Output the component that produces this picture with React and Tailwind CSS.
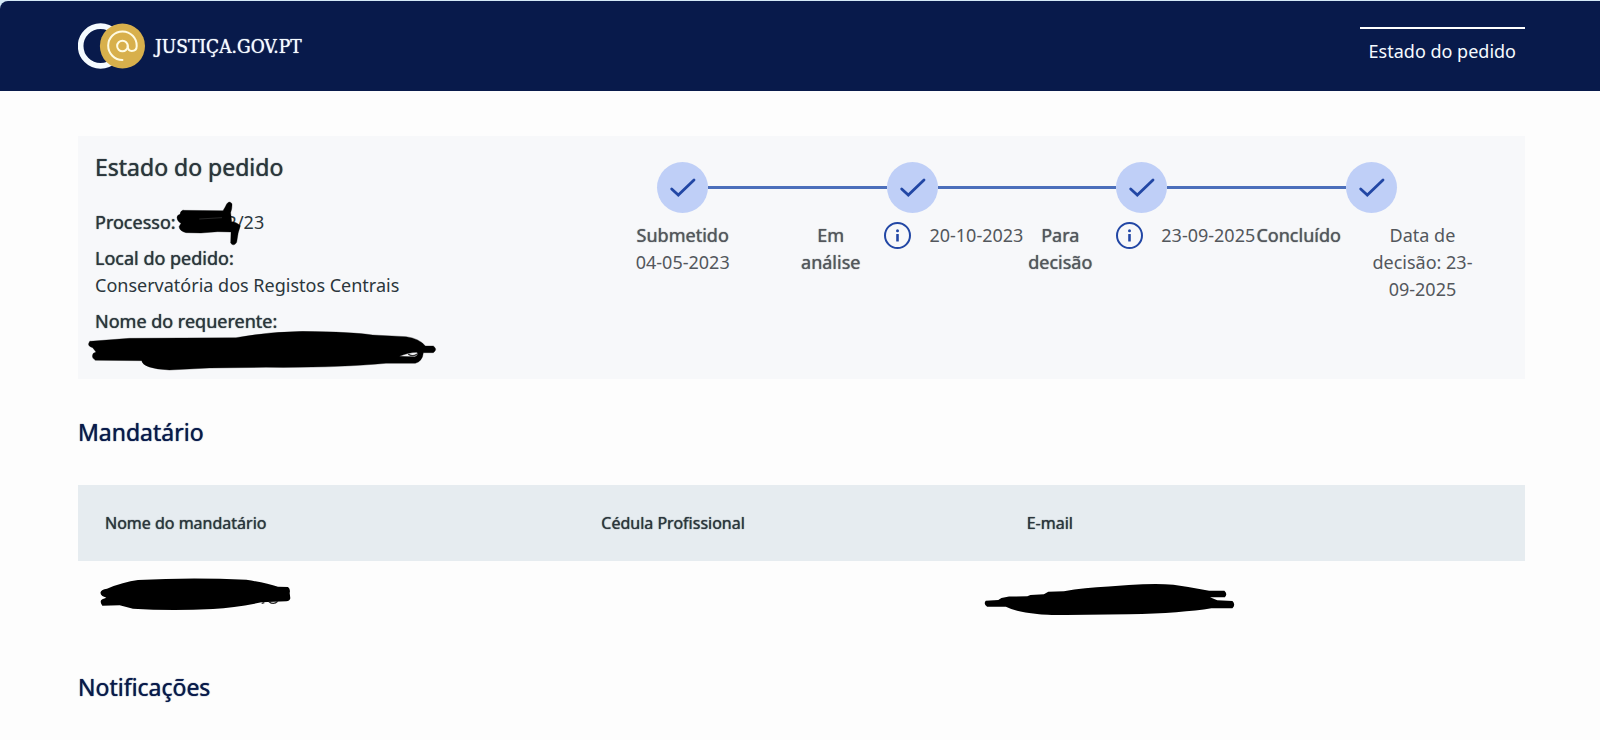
import React from 'react';

const steps = [
  { label: 'Submetido', date: '04-05-2023', layout: 'stacked' },
  { label: 'Em análise', date: '20-10-2023', layout: 'info' },
  { label: 'Para decisão', date: '23-09-2025', layout: 'info' },
  { label: 'Concluído', date: 'Data de decisão: 23-09-2025', layout: 'final' },
];

function Logo() {
  return (
    <svg viewBox="0 0 202 138" className="h-[46px] w-[67px] shrink-0" aria-hidden="true">
      <circle cx="68" cy="69" r="60" fill="none" stroke="#f5fbff" strokeWidth="17" />
      <circle cx="134" cy="69" r="68" fill="#d8b04c" />
      <circle cx="134" cy="69" r="16" fill="none" stroke="#fffbe2" strokeWidth="6" />
      <path
        d="M150 69 C150 79 154 84 162 84 C171 84 177 78 177 69 A43 43 0 1 0 134 111"
        fill="none"
        stroke="#fffbe2"
        strokeWidth="6"
        strokeLinecap="round"
      />
    </svg>
  );
}

function StepDetails({ step }) {
  if (step.layout === 'stacked') {
    return (
      <div className="text-center">
        <p className="[text-shadow:0_0_1px_currentColor]">{step.label}</p>
        <p>{step.date}</p>
      </div>
    );
  }
  if (step.layout === 'info') {
    return (
      <div className="flex items-start justify-center">
        <p className="w-min text-center [text-shadow:0_0_1px_currentColor]">{step.label}</p>
        <button type="button" aria-label="Informação" className="ml-6 mr-[18px] shrink-0">
          <svg viewBox="0 0 27 27" className="block size-[27px]">
            <circle cx="13.5" cy="13.5" r="12.5" fill="none" stroke="#2247a5" strokeWidth="2" />
            <rect x="12.2" y="12" width="2.600" height="7.500" rx="0.5" fill="#2247a5" />
            <circle cx="13.5" cy="8.700" r="1.500" fill="#2247a5" />
          </svg>
        </button>
        <p className="whitespace-nowrap">{step.date}</p>
      </div>
    );
  }
  return (
    <div className="flex items-start">
      <p className="[text-shadow:0_0_1px_currentColor]">{step.label}</p>
      <p className="flex-1 pl-[27px] pr-[9px] text-center">{step.date}</p>
    </div>
  );
}

export default function App() {
  return (
    <div className="min-h-screen bg-[#fdfdfd] font-['Noto_Sans',sans-serif] text-[#2b363c]">
      <div className="bg-[#d5eaf7] pt-px">
        <header className="flex h-[90px] items-start justify-between rounded-tl-lg bg-[#081a4b] pl-[78px] pr-[75px] text-[#f5fbff]">
          <a href="#" className="flex items-center gap-[10px] pt-[22px]">
            <Logo />
            <span className="font-['DejaVu_Serif_Condensed','DejaVu_Serif',serif] text-[19px] leading-[27px] [text-shadow:0_0_1px_currentColor]">
              JUSTIÇA.GOV.PT
            </span>
          </a>
          <nav className="pt-[26px]">
            <a href="#" className="block border-t-2 border-white px-[9px] pt-[9px] text-[18px] leading-[27px]">
              Estado do pedido
            </a>
          </nav>
        </header>
      </div>

      <main className="pb-9 pl-[78px] pr-[75px] pt-[45px] text-[18px] leading-[27px]">
        <section className="flex justify-between bg-[#f7f8fa] pb-[17px] pl-[17px] pr-[39px] pt-4">
          <div>
            <h1 className="text-[23px] leading-[30px] [text-shadow:0_0_1px_currentColor]">Estado do pedido</h1>
            <dl className="mt-[27px] flex flex-col gap-[9px]">
              <div className="flex">
                <dt className="[text-shadow:0_0_1px_currentColor]">Processo:</dt>
                <dd className="relative pl-[51px]">
                  2/23
                  <svg
                    viewBox="315 210 201 135"
                    className="absolute -top-2 left-0 h-[45px] w-[67px]"
                    fill="none"
                    stroke="#000"
                    strokeLinecap="round"
                    strokeLinejoin="round"
                    aria-hidden="true"
                  >
                    <path
                      d="M336 238 L456 239 Q462 230 467 219 Q475 208 483 218 Q484 230 479 245 L482 272 Q495 272 508 284 Q500 305 497 334 Q488 348 479 336 L480 303 L440 302 L390 306 L345 305 Q326 300 324 287 L330 277 Q318 270 318 260 Q318 252 327 250 Q328 240 336 238 Z"
                      fill="#000"
                    />
                    <path d="M386 264 L452 260" stroke="#777" strokeWidth="1" />
                  </svg>
                </dd>
              </div>
              <div>
                <dt className="[text-shadow:0_0_1px_currentColor]">Local do pedido:</dt>
                <dd>Conservatória dos Registos Centrais</dd>
              </div>
              <div>
                <dt className="[text-shadow:0_0_1px_currentColor]">Nome do requerente:</dt>
                <dd className="relative h-[27px]">
                  <svg
                    viewBox="53 600 1050 120"
                    className="absolute -left-2 -top-1 h-10 w-[350px]"
                    fill="none"
                    stroke="#000"
                    strokeLinecap="round"
                    strokeLinejoin="round"
                    aria-hidden="true"
                  >
                    <path
                      d="M62 631 L180 622 L500 620 Q600 602 700 601 Q850 603 910 612 L1010 617 Q1050 622 1068 645 L1092 645 Q1106 655 1092 665 L1062 665 Q1060 690 1038 697 L950 697 Q800 711 590 709 L420 711 L300 717 Q220 712 217 689 L78 688 Q64 680 72 667 L80 663 L70 650 Q50 644 62 631 Z"
                      fill="#000"
                    />
                    <path d="M990 676 Q1020 664 1043 664 Q1048 674 1036 677 Z" fill="#f7f8fa" />
                    <path d="M1018 670 Q1030 678 1042 670" stroke="#333" strokeWidth="4" />
                  </svg>
                </dd>
              </div>
            </dl>
          </div>

          <ol className="grid w-[66%] grid-cols-4 pt-[10px] text-[#53575c]">
            {steps.map((step, i) => (
              <li key={step.label}>
                <div className="mb-[9px] flex items-center">
                  <span className={i > 0 ? 'h-[3px] flex-1 bg-[#4c6fbb]' : 'h-[3px] flex-1'} />
                  <span className="flex size-[51px] items-center justify-center rounded-full bg-[#bfcff7]">
                    <svg viewBox="0 0 51 51" className="size-[51px]" aria-hidden="true">
                      <path
                        d="M14.700 27 L21.300 33 L37 18"
                        fill="none"
                        stroke="#2247a5"
                        strokeWidth="2.800"
                        strokeLinecap="round"
                        strokeLinejoin="miter"
                      />
                    </svg>
                  </span>
                  <span
                    className={i < steps.length - 1 ? 'h-[3px] flex-1 bg-[#4c6fbb]' : 'h-[3px] flex-1'}
                  />
                </div>
                <StepDetails step={step} />
              </li>
            ))}
          </ol>
        </section>

        <h2 className="mt-[38px] text-[23px] leading-[30px] text-[#081a4b] [text-shadow:0_0_1px_currentColor]">
          Mandatário
        </h2>
        <table className="mt-[38px] w-full table-fixed text-left">
          <thead className="bg-[#e6ecf0] text-[16px] [text-shadow:0_0_1px_currentColor]">
            <tr className="h-[76px]">
              <th scope="col" className="w-[34.3%] px-[27px] font-normal">Nome do mandatário</th>
              <th scope="col" className="w-[29.4%] px-[27px] font-normal">Cédula Profissional</th>
              <th scope="col" className="px-[27px] font-normal">E-mail</th>
            </tr>
          </thead>
          <tbody>
            <tr className="h-[76px] align-top">
              <td className="pl-[22px] pt-4">
                <svg viewBox="91 530 573 102" className="block h-[34px] w-[191px]" aria-hidden="true">
                  <path
                    d="M93 575 Q95 567 112 565 Q160 545 205 539 Q360 530 530 538 Q590 548 625 559 L655 560 Q663 566 660 578 L662 594 Q660 603 650 603 L575 606 Q500 622 430 626 Q300 632 190 625 L150 615 L98 616 Q88 602 98 597 L110 592 L98 587 Q91 582 93 575 Z"
                    fill="#000"
                  />
                  <path d="M576 609 L584 607 M598 604 Q612 615 624 603" fill="none" stroke="#222" strokeWidth="4" />
                </svg>
              </td>
              <td />
              <td className="relative pt-[22px]">
                <svg
                  viewBox="906 340 564 97"
                  preserveAspectRatio="none"
                  className="absolute -left-4 top-[22px] h-[33px] w-[252px]"
                  aria-hidden="true"
                >
                  <path
                    d="M910 392 L938 390 L945 384 L962 380 L1003 379 L1010 375 L1040 373 L1050 366 L1085 364 Q1130 353 1185 350 L1230 346 Q1290 340 1330 345 Q1370 352 1410 363 L1444 363 Q1452 372 1445 382 L1412 382 L1428 391 L1462 393 Q1470 404 1462 414 L1415 414 Q1350 428 1230 432 L1090 434 Q1040 434 1025 431 Q975 424 955 410 L913 410 Q904 402 910 392 Z"
                    fill="#000"
                  />
                </svg>
              </td>
            </tr>
          </tbody>
        </table>

        <h2 className="mt-[35px] text-[23px] leading-[30px] text-[#081a4b] [text-shadow:0_0_1px_currentColor]">
          Notificações
        </h2>
      </main>
    </div>
  );
}
